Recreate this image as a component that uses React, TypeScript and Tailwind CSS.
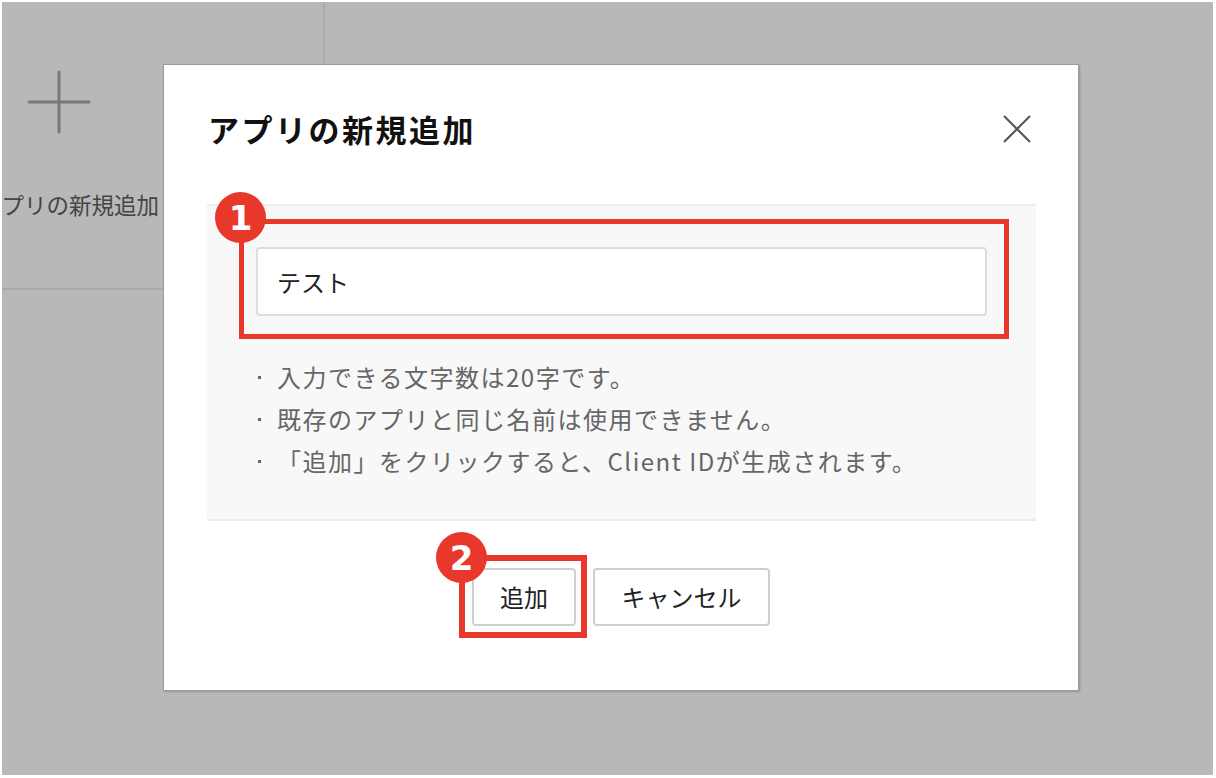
import React from 'react';

const notes = [
  '入力できる文字数は20字です。',
  '既存のアプリと同じ名前は使用できません。',
  '「追加」をクリックすると、Client IDが生成されます。',
];

const Badge = ({ n, className }: { n: number; className: string }) => (
  <div
    className={`absolute flex h-[51px] w-[51px] items-center justify-center rounded-full bg-[#e8382b] text-[34px] font-bold leading-none text-white ${className}`}
    style={{ fontFamily: '"DejaVu Sans", sans-serif' }}
  >
    {n}
  </div>
);

const App = () => {
  return (
    <div
      className="h-[778px] w-[1216px] bg-white pb-[3px] pl-[2px] pr-[3px] pt-[2px]"
      style={{ fontFamily: '"Noto Sans CJK JP", "Noto Sans", sans-serif' }}
    >
      <div className="relative h-full w-full overflow-hidden bg-[#b8b8b8]">
        {/* background card */}
        <div className="flex h-[288px] w-[323px] flex-col items-start overflow-hidden border-b-2 border-r-2 border-[#aaaaaa]">
          <svg
            width="64"
            height="64"
            viewBox="0 0 64 64"
            className="ml-[25px] mt-[68px]"
          >
            <path
              d="M32 2v60M2 32h60"
              stroke="#787878"
              strokeWidth="3"
              strokeLinecap="round"
            />
          </svg>
          <div className="ml-[-23px] mt-[55px] whitespace-nowrap text-[22.5px] leading-[30px] text-[#454545]">
            アプリの新規追加
          </div>
        </div>

        {/* modal */}
        <div className="absolute left-[161px] top-[62px] h-[627px] w-[916px] border border-[#9a9a9a] bg-white shadow-[1px_1px_2px_rgba(0,0,0,0.2)]">
          <div className="flex items-center justify-between pl-[44px] pr-[47px] pt-[44px]">
            <h2 className="text-[31px] font-bold leading-[40px] tracking-[2.5px] text-[#111]">
              アプリの新規追加
            </h2>
            <svg width="28" height="28" viewBox="0 0 28 28">
              <path
                d="M1 1l26 26M27 1L1 27"
                stroke="#555"
                strokeWidth="2"
              />
            </svg>
          </div>

          <div className="ml-[43px] mr-[42px] mt-[55px] border-y-2 border-[#ececec] bg-[#f8f8f8] pb-[37px] pt-[41px]">
            <div className="mx-[49px] flex h-[69px] items-center rounded-[4px] border-2 border-[#dcdcdc] bg-white pl-[19px] text-[24px] text-[#222]">
              テスト
            </div>
            <ul className="mt-[40px] pl-[51px]">
              {notes.map((note) => (
                <li
                  key={note}
                  className="flex h-[42px] items-center text-[24px] tracking-[1.5px] text-[#666]"
                >
                  <span className="mr-[16px] h-[3px] w-[3px] bg-[#666]" />
                  {note}
                </li>
              ))}
            </ul>
          </div>

          <div className="mt-[47px] flex justify-center gap-[17px]">
            <button className="h-[58px] w-[104px] rounded-[4px] border-2 border-[#cfcfcf] bg-white text-[24px] text-[#222]">
              追加
            </button>
            <button className="h-[58px] w-[177px] rounded-[4px] border-2 border-[#cfcfcf] bg-white text-[24px] text-[#222]">
              キャンセル
            </button>
          </div>

          {/* annotations */}
          <div className="absolute left-[75px] top-[154px] h-[120px] w-[770px] border-[5px] border-[#e8382b]" />
          <Badge n={1} className="left-[51px] top-[127px]" />
          <div className="absolute left-[295px] top-[490px] h-[83px] w-[128px] border-[6px] border-[#e8382b]" />
          <Badge n={2} className="left-[272px] top-[467px]" />
        </div>
      </div>
    </div>
  );
};

export default App;
